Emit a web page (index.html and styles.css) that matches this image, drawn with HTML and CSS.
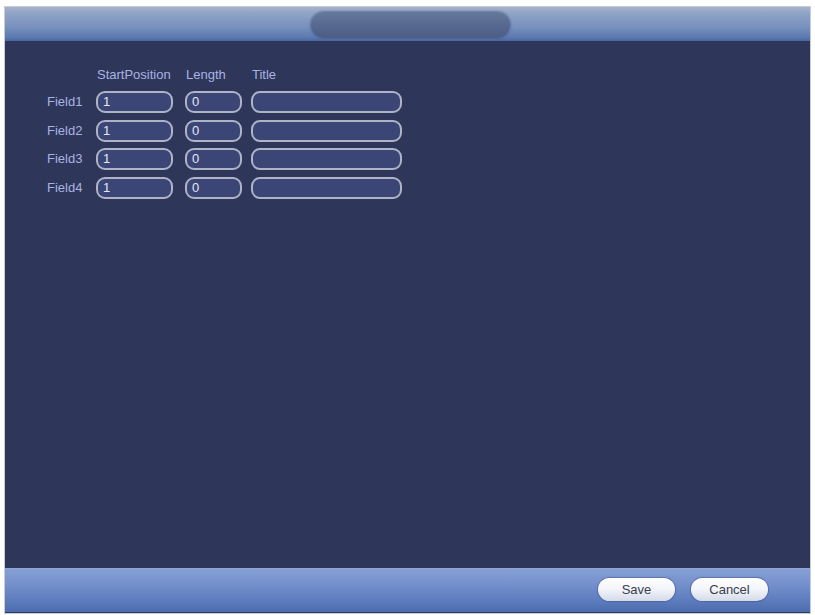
FILE: index.html
```html
<!DOCTYPE html>
<html>
<head>
<meta charset="utf-8">
<link rel="stylesheet" href="styles.css">
</head>
<body>
<div class="frame">
  <div class="header"><div class="title-pill"></div></div>
  <div class="content">
    <div class="form">
      <div></div>
      <div class="colhead">StartPosition</div>
      <div class="colhead">Length</div>
      <div class="colhead">Title</div>

      <div class="label">Field1</div>
      <div><div class="input w1">1</div></div>
      <div><div class="input w2">0</div></div>
      <div><div class="input w3"></div></div>

      <div class="label">Field2</div>
      <div><div class="input w1">1</div></div>
      <div><div class="input w2">0</div></div>
      <div><div class="input w3"></div></div>

      <div class="label">Field3</div>
      <div><div class="input w1">1</div></div>
      <div><div class="input w2">0</div></div>
      <div><div class="input w3"></div></div>

      <div class="label">Field4</div>
      <div><div class="input w1">1</div></div>
      <div><div class="input w2">0</div></div>
      <div><div class="input w3"></div></div>
    </div>
  </div>
  <div class="footer">
    <button class="btn">Save</button>
    <button class="btn">Cancel</button>
  </div>
</div>
</body>
</html>
```
FILE: styles.css
```css
html, body {
  margin: 0;
  padding: 0;
  background: #ffffff;
}
body {
  padding: 7px 5px 2px 5px;
  font-family: "Liberation Sans", Arial, sans-serif;
  font-size: 13px;
}
.frame {
  width: 805px;
  height: 606px;
  display: flex;
  flex-direction: column;
  background: #2e3659;
  box-shadow: 0 0 0 1px #c9ccd4;
}
.header {
  height: 34px;
  display: flex;
  justify-content: center;
  align-items: flex-start;
  background: linear-gradient(to bottom, #a4b2cc 0%, #8fa3c6 20%, #7790bd 60%, #5a79b0 90%, #4a68a0 100%);
}
.title-pill {
  margin-top: 5px;
  margin-left: 6px;
  width: 199px;
  height: 26px;
  border-radius: 13px;
  background: linear-gradient(to bottom, #66789b 0%, #57698f 50%, #4b5d86 100%);
  box-shadow: 0 0 2px 1px rgba(70, 90, 130, 0.6);
}
.content {
  flex: 1;
  padding: 25px 0 0 42px;
}
.form {
  display: grid;
  grid-template-columns: 49px 89px 66px 151px;
  grid-template-rows: 18px repeat(4, 22px);
  row-gap: 6.8px;
  align-items: center;
}
.colhead {
  color: #a9b3e2;
  padding-left: 1px;
  line-height: 18px;
  align-self: start;
}
.label {
  color: #a9b3e2;
  line-height: 22px;
}
.input {
  box-sizing: border-box;
  height: 22px;
  border: 2px solid #aeb3c6;
  border-radius: 9px;
  background: #3b4677;
  color: #e4e8f4;
  line-height: 18px;
  padding-left: 5px;
}
.w1 { width: 77px; }
.w2 { width: 57px; }
.w3 { width: 151px; }
.footer {
  height: 45px;
  box-sizing: border-box;
  display: flex;
  justify-content: flex-end;
  align-items: center;
  gap: 16px;
  padding: 0 42px 2px 0;
  border-top: 1px solid #90a4d6;
  border-bottom: 1px solid #2c3a66;
  background: linear-gradient(to bottom, #86a0d6 0%, #7590cc 35%, #5f7ebf 70%, #4d6cae 100%);
}
.btn {
  width: 77px;
  height: 23px;
  border: none;
  border-radius: 12px;
  background: linear-gradient(to bottom, #ffffff 0%, #f2f4fa 50%, #d4dae8 100%);
  box-shadow: 0 0 1px 1px rgba(60, 80, 130, 0.5);
  color: #3a3f4a;
  font-family: "Liberation Sans", Arial, sans-serif;
  font-size: 13px;
  padding: 0;
}
```
